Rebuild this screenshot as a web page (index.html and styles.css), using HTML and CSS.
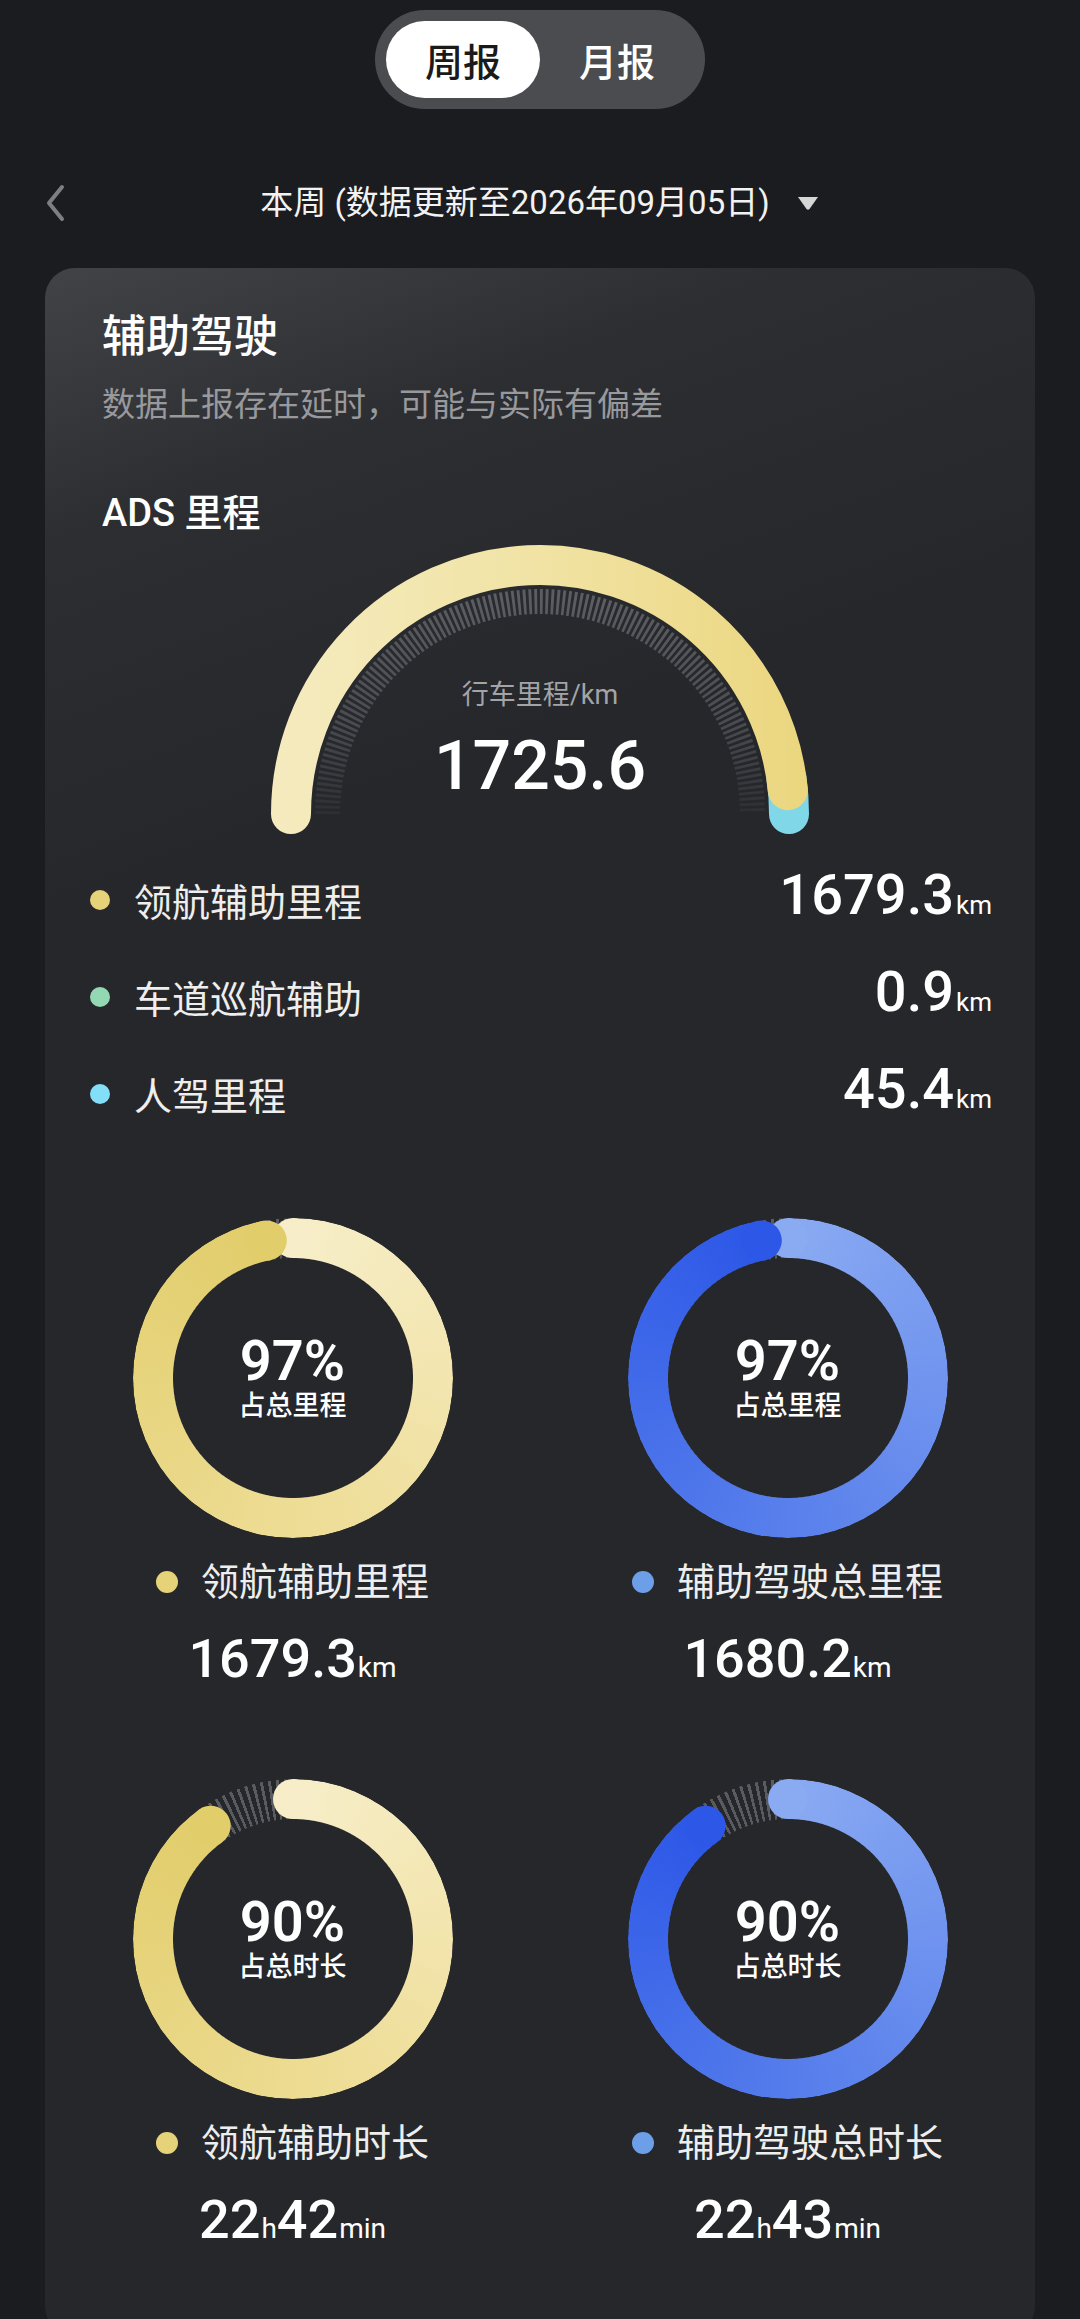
FILE: index.html
```html
<!DOCTYPE html>
<html>
  <head>
    <meta name="viewport" content="width=device-width, initial-scale=1.0" />
    <title>辅助驾驶周报</title>
    <link rel="stylesheet" href="styles.css">
  </head>
  <body>
    <div class="screen">
      <div class="tabs">
        <span class="tab active">周报</span>
        <span class="tab">月报</span>
      </div>

      <div class="period">
        <svg class="back" width="20" height="38" viewBox="0 0 20 38">
          <polyline points="17,3 4,19 17,35" />
        </svg>
        <div class="period-title">
          <span>本周 (数据更新至2026年09月05日)</span>
          <svg class="caret" width="24" height="16" viewBox="0 0 24 16">
            <path d="M2 2 H22 L13.5 14 Q12 15.6 10.5 14 Z" />
          </svg>
        </div>
      </div>

      <section class="card">
        <h2 class="card-title">辅助驾驶</h2>
        <p class="card-note">数据上报存在延时，可能与实际有偏差</p>
        <h3 class="section-title">ADS 里程</h3>

        <div class="gauge">
          <svg class="gauge-chart" width="540" height="290" viewBox="0 0 540 290">
            <defs>
              <linearGradient id="gaugeFill" x1="0" y1="0" x2="540" y2="0" gradientUnits="userSpaceOnUse">
                <stop offset="0" stop-color="#f5ebbf" />
                <stop offset="0.5" stop-color="#f1e3a4" />
                <stop offset="1" stop-color="#ebd67e" />
              </linearGradient>
              <linearGradient id="tickFade" x1="0" y1="56" x2="0" y2="280" gradientUnits="userSpaceOnUse">
                <stop offset="0" stop-color="#5c5d62" />
                <stop offset="0.55" stop-color="#4a4b50" />
                <stop offset="1" stop-color="#2a2b2f" />
              </linearGradient>
            </defs>
            <path class="gauge-ticks" d="M57.5 269 A212.5 212.5 0 0 1 482.5 269" />
            <path class="gauge-human" d="M516.6 234.3 A249 249 0 0 1 519 269" />
            <path class="gauge-assist" d="M21 269 A249 249 0 0 1 517.85 245.13" />
          </svg>
          <div class="gauge-text">
            <div class="gauge-label">行车里程/km</div>
            <div class="gauge-value">1725.6</div>
          </div>
        </div>

        <ul class="stat-list">
          <li class="stat-row">
            <i class="dot dot-gold"></i>
            <span class="stat-name">领航辅助里程</span>
            <span class="stat-value">1679.3<small>km</small></span>
          </li>
          <li class="stat-row">
            <i class="dot dot-green"></i>
            <span class="stat-name">车道巡航辅助</span>
            <span class="stat-value">0.9<small>km</small></span>
          </li>
          <li class="stat-row">
            <i class="dot dot-cyan"></i>
            <span class="stat-name">人驾里程</span>
            <span class="stat-value">45.4<small>km</small></span>
          </li>
        </ul>

        <div class="rings">
          <div class="ring-item">
            <div class="ring ring-gold" style="--p: 349.2deg">
              <div class="ring-ticks"></div>
              <div class="ring-arc"></div>
              <i class="ring-cap ring-cap-start"></i>
              <i class="ring-cap ring-cap-end"></i>
              <div class="ring-center"><b>97%</b><span>占总里程</span></div>
            </div>
            <div class="ring-legend"><i class="dot dot-gold"></i>领航辅助里程</div>
            <div class="ring-value">1679.3<small>km</small></div>
          </div>

          <div class="ring-item">
            <div class="ring ring-blue" style="--p: 349.2deg">
              <div class="ring-ticks"></div>
              <div class="ring-arc"></div>
              <i class="ring-cap ring-cap-start"></i>
              <i class="ring-cap ring-cap-end"></i>
              <div class="ring-center"><b>97%</b><span>占总里程</span></div>
            </div>
            <div class="ring-legend"><i class="dot dot-blue"></i>辅助驾驶总里程</div>
            <div class="ring-value">1680.2<small>km</small></div>
          </div>

          <div class="ring-item">
            <div class="ring ring-gold" style="--p: 324deg">
              <div class="ring-ticks"></div>
              <div class="ring-arc"></div>
              <i class="ring-cap ring-cap-start"></i>
              <i class="ring-cap ring-cap-end"></i>
              <div class="ring-center"><b>90%</b><span>占总时长</span></div>
            </div>
            <div class="ring-legend"><i class="dot dot-gold"></i>领航辅助时长</div>
            <div class="ring-value">22<small>h</small>42<small>min</small></div>
          </div>

          <div class="ring-item">
            <div class="ring ring-blue" style="--p: 324deg">
              <div class="ring-ticks"></div>
              <div class="ring-arc"></div>
              <i class="ring-cap ring-cap-start"></i>
              <i class="ring-cap ring-cap-end"></i>
              <div class="ring-center"><b>90%</b><span>占总时长</span></div>
            </div>
            <div class="ring-legend"><i class="dot dot-blue"></i>辅助驾驶总时长</div>
            <div class="ring-value">22<small>h</small>43<small>min</small></div>
          </div>
        </div>
      </section>
    </div>
  </body>
</html>
```

FILE: styles.css
```css
html,
body {
  margin: 0;
  padding: 0;
  background: #1b1c20;
}
body {
  font-family: Roboto, "Noto Sans CJK SC", sans-serif;
  color: #fff;
}
.screen {
  width: 1080px;
  min-height: 2319px;
  overflow: hidden;
}

/* week / month switch */
.tabs {
  display: flex;
  width: fit-content;
  margin: 10px auto 0;
  padding: 11px;
  border-radius: 50px;
  background: #4b4c50;
}
.tab {
  display: flex;
  align-items: center;
  justify-content: center;
  width: 154px;
  height: 77px;
  border-radius: 39px;
  font-size: 38px;
  font-weight: 500;
  color: #fff;
}
.tab.active {
  background: #fff;
  color: #1a1a1a;
}

/* period row */
.period {
  display: grid;
  grid-template-columns: 1fr auto 1fr;
  align-items: center;
  height: 40px;
  margin-top: 74px;
}
.back {
  margin-left: 45px;
}
.back polyline {
  fill: none;
  stroke: #7e7f83;
  stroke-width: 4;
  stroke-linecap: round;
  stroke-linejoin: round;
}
.period-title {
  display: flex;
  align-items: center;
  gap: 26px;
  font-size: 33px;
  line-height: 40px;
  color: #f2f2f2;
}
.caret path {
  fill: #d6d6d6;
}

/* card */
.card {
  margin: 45px 45px 0;
  padding: 41px 0 80px;
  border-radius: 30px;
  background: linear-gradient(160deg, #424347 0px, #2d2e32 260px, #26272b 620px);
}
.card-title {
  margin: 0 57px;
  font-size: 44px;
  line-height: 56px;
  font-weight: 500;
  color: #fff;
}
.card-note {
  margin: 18px 57px 0;
  font-size: 33px;
  line-height: 44px;
  color: #98999d;
}
.section-title {
  margin: 62px 57px 0;
  font-size: 38px;
  line-height: 48px;
  font-weight: 500;
  color: #fff;
}

/* gauge */
.gauge {
  display: grid;
  justify-content: center;
  margin-top: 8px;
}
.gauge > * {
  grid-area: 1 / 1;
}
.gauge-chart {
  display: block;
}
.gauge-chart path {
  fill: none;
}
.gauge-ticks {
  stroke: url(#tickFade);
  stroke-width: 25;
  stroke-dasharray: 2.8 2.76;
}
.gauge-human {
  stroke: #80d7e8;
  stroke-width: 40;
  stroke-linecap: round;
}
.gauge-assist {
  stroke: url(#gaugeFill);
  stroke-width: 40;
  stroke-linecap: round;
}
.gauge-text {
  align-self: start;
  padding-top: 132px;
  text-align: center;
}
.gauge-label {
  font-size: 27px;
  line-height: 36px;
  color: #a3a4a8;
}
.gauge-value {
  margin-top: 19px;
  font-size: 68px;
  line-height: 68px;
  font-weight: 500;
}

/* mileage list */
.stat-list {
  list-style: none;
  margin: 16px 0 0;
  padding: 0 43px 0 45px;
}
.stat-row {
  display: flex;
  align-items: center;
  height: 97px;
}
.dot {
  display: inline-block;
  flex: none;
  width: 20px;
  height: 20px;
  border-radius: 50%;
}
.dot-gold {
  background: #e5d279;
}
.dot-green {
  background: #93d8b3;
}
.dot-cyan {
  background: #83def7;
}
.dot-blue {
  background: #6c9fe7;
}
.stat-name {
  margin-left: 24px;
  font-size: 38px;
  color: #eeeeee;
}
.stat-value {
  margin-left: auto;
  font-size: 56px;
  line-height: 56px;
  font-weight: 500;
}
.stat-value small {
  margin-left: 2px;
  font-size: 26px;
  font-weight: 400;
}

/* donut charts */
.rings {
  display: grid;
  grid-template-columns: 1fr 1fr;
  row-gap: 84px;
  margin-top: 76px;
}
.ring-item {
  display: flex;
  flex-direction: column;
  align-items: center;
}
.ring {
  position: relative;
  display: grid;
  width: 320px;
  height: 320px;
}
.ring > div {
  grid-area: 1 / 1;
}
.ring-gold {
  --c1: #f7eec9;
  --c2: #eedd96;
  --c3: #e1cd6a;
}
.ring-blue {
  --c1: #8aaaf2;
  --c2: #5a81ec;
  --c3: #2c57e7;
}
.ring-ticks,
.ring-arc {
  border-radius: 50%;
  -webkit-mask: radial-gradient(circle closest-side, transparent 119.5px, #000 120.5px);
  mask: radial-gradient(circle closest-side, transparent 119.5px, #000 120.5px);
}
.ring-ticks {
  background: repeating-conic-gradient(#5a5b60 0deg 1.1deg, transparent 1.1deg 2.9deg);
}
.ring-arc {
  background: conic-gradient(var(--c1) 0deg, var(--c2) calc(var(--p) / 2), var(--c3) var(--p), transparent var(--p));
}
.ring-cap {
  position: absolute;
  top: 0;
  left: 140px;
  width: 40px;
  height: 40px;
  border-radius: 50%;
  transform-origin: 20px 160px;
}
.ring-cap-start {
  background: var(--c1);
}
.ring-cap-end {
  background: var(--c3);
  transform: rotate(var(--p));
}
.ring-center {
  align-self: center;
  justify-self: center;
  display: flex;
  flex-direction: column;
  align-items: center;
}
.ring-center b {
  font-size: 56px;
  line-height: 56px;
  font-weight: 600;
}
.ring-center span {
  margin-top: 0;
  font-size: 27px;
  line-height: 34px;
  font-weight: 500;
}
.ring-legend {
  display: flex;
  align-items: center;
  gap: 23px;
  margin-top: 19px;
  font-size: 38px;
  line-height: 50px;
  color: #eeeeee;
}
.ring-legend .dot {
  width: 22px;
  height: 22px;
}
.ring-value {
  margin-top: 25px;
  font-size: 54px;
  line-height: 54px;
  font-weight: 500;
}
.ring-value small {
  margin-left: 1px;
  font-size: 28px;
  font-weight: 400;
}
```
